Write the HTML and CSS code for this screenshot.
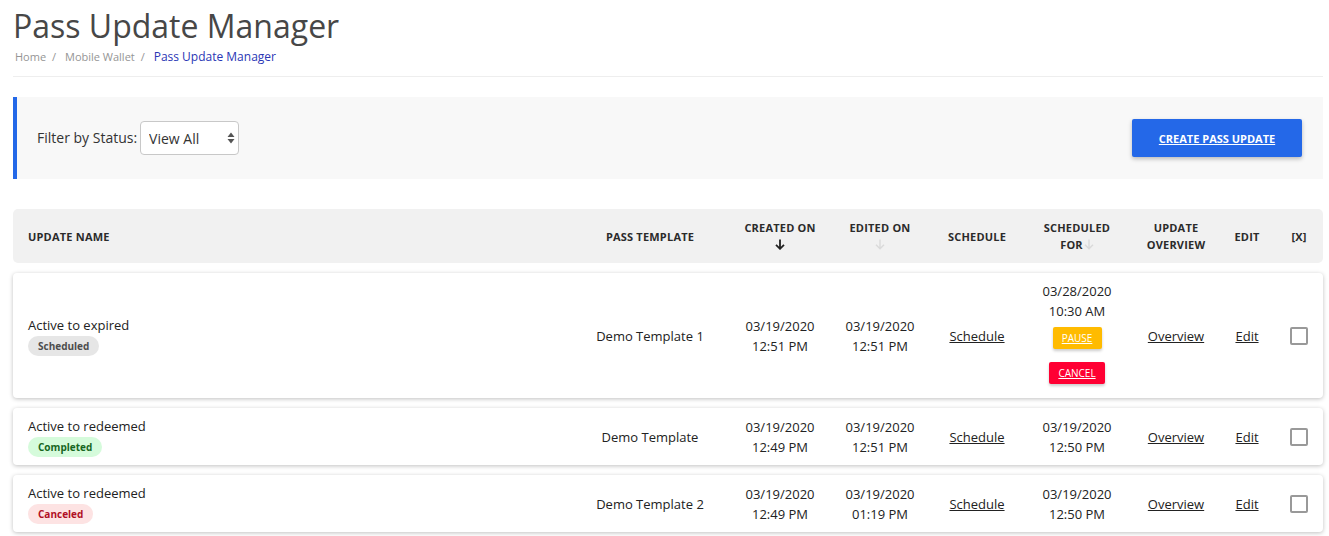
FILE: index.html
```html
<!DOCTYPE html>
<html lang="en">
<head>
<meta charset="utf-8">
<title>Pass Update Manager</title>
<link rel="stylesheet" href="styles.css">
</head>
<body>
<div class="page">
  <header class="page-head">
    <h1 class="title">Pass Update Manager</h1>
    <nav class="crumbs">
      <a href="#" class="crumb">Home</a><span class="sep">/</span>
      <a href="#" class="crumb">Mobile Wallet</a><span class="sep">/</span>
      <span class="crumb current">Pass Update Manager</span>
    </nav>
  </header>

  <section class="filter-bar">
    <div class="filter">
      <label class="filter-label" for="status">Filter by Status:</label>
      <div class="select-wrap">
        <select id="status" class="select">
          <option>View All</option>
          <option>Scheduled</option>
          <option>Completed</option>
          <option>Canceled</option>
        </select>
        <svg class="select-arrows" width="8" height="12" viewBox="0 0 8 12"><path d="M4 0.5 L7.5 5 L0.5 5 Z M4 11.5 L7.5 7 L0.5 7 Z" fill="#555"/></svg>
      </div>
    </div>
    <a href="#" class="btn-create">CREATE PASS UPDATE</a>
  </section>

  <div class="table">
    <div class="row head">
      <div class="cell name">UPDATE NAME</div>
      <div class="cell">PASS TEMPLATE</div>
      <div class="cell">CREATED ON<br><svg class="sort" width="10" height="11" viewBox="0 0 10 11"><path d="M5 0.5 V9.5 M1 5.8 L5 9.8 L9 5.8" fill="none" stroke="#222" stroke-width="1.8"/></svg></div>
      <div class="cell">EDITED ON<br><svg class="sort" width="10" height="11" viewBox="0 0 10 11"><path d="M5 0.5 V9.5 M1 5.8 L5 9.8 L9 5.8" fill="none" stroke="#dadada" stroke-width="1.4"/></svg></div>
      <div class="cell">SCHEDULE</div>
      <div class="cell">SCHEDULED<br>FOR<svg class="sort inline" width="10" height="11" viewBox="0 0 10 11"><path d="M5 0.5 V9.5 M1 5.8 L5 9.8 L9 5.8" fill="none" stroke="#dadada" stroke-width="1.4"/></svg></div>
      <div class="cell">UPDATE<br>OVERVIEW</div>
      <div class="cell">EDIT</div>
      <div class="cell">[X]</div>
    </div>

    <div class="row card tall">
      <div class="cell name">
        <div>Active to expired</div>
        <span class="badge scheduled">Scheduled</span>
      </div>
      <div class="cell">Demo Template 1</div>
      <div class="cell">03/19/2020<br>12:51 PM</div>
      <div class="cell">03/19/2020<br>12:51 PM</div>
      <div class="cell"><a href="#" class="link">Schedule</a></div>
      <div class="cell stack">
        <div>03/28/2020<br>10:30 AM</div>
        <a href="#" class="mini pause">PAUSE</a>
        <a href="#" class="mini cancel">CANCEL</a>
      </div>
      <div class="cell"><a href="#" class="link">Overview</a></div>
      <div class="cell"><a href="#" class="link">Edit</a></div>
      <div class="cell"><span class="check"></span></div>
    </div>

    <div class="row card">
      <div class="cell name">
        <div>Active to redeemed</div>
        <span class="badge completed">Completed</span>
      </div>
      <div class="cell">Demo Template</div>
      <div class="cell">03/19/2020<br>12:49 PM</div>
      <div class="cell">03/19/2020<br>12:51 PM</div>
      <div class="cell"><a href="#" class="link">Schedule</a></div>
      <div class="cell">03/19/2020<br>12:50 PM</div>
      <div class="cell"><a href="#" class="link">Overview</a></div>
      <div class="cell"><a href="#" class="link">Edit</a></div>
      <div class="cell"><span class="check"></span></div>
    </div>

    <div class="row card">
      <div class="cell name">
        <div>Active to redeemed</div>
        <span class="badge canceled">Canceled</span>
      </div>
      <div class="cell">Demo Template 2</div>
      <div class="cell">03/19/2020<br>12:49 PM</div>
      <div class="cell">03/19/2020<br>01:19 PM</div>
      <div class="cell"><a href="#" class="link">Schedule</a></div>
      <div class="cell">03/19/2020<br>12:50 PM</div>
      <div class="cell"><a href="#" class="link">Overview</a></div>
      <div class="cell"><a href="#" class="link">Edit</a></div>
      <div class="cell"><span class="check"></span></div>
    </div>
  </div>
</div>
</body>
</html>
```

FILE: styles.css
```css
* { box-sizing: border-box; }
html, body { margin: 0; padding: 0; background: #fff; }
body {
  font-family: "Open Sans", "Liberation Sans", sans-serif;
  color: #222;
  font-size: 13px;
}
.page {
  padding: 0 6px 0 13px;
}
.page-head {
  border-bottom: 1px solid #eeeeee;
  padding-bottom: 11px;
}
.title {
  margin: 0;
  padding-top: 5px;
  font-size: 32px;
  font-weight: 400;
  line-height: 42px;
  color: #474747;
}
.crumbs {
  font-size: 11px;
  line-height: 16px;
  padding-left: 2px;
  margin-top: 2px;
}
.crumb { color: #959595; text-decoration: none; }
.crumb.current { color: #2a36b5; font-size: 12px; }
.sep { color: #959595; margin: 0 6px; }

.filter-bar {
  margin-top: 20px;
  height: 82px;
  background: #f8f8f8;
  border-left: 4px solid #2368e8;
  display: flex;
  align-items: center;
  justify-content: space-between;
  padding: 0 21px 0 20px;
}
.filter { display: flex; align-items: center; gap: 3px; }
.filter-label { font-size: 14px; color: #333; margin-top: -2px; }
.select-wrap { position: relative; }
.select {
  appearance: none;
  -webkit-appearance: none;
  width: 99px;
  height: 34px;
  border: 1px solid #c8c8c8;
  border-radius: 4px;
  background: #fff;
  font-family: inherit;
  font-size: 14px;
  color: #333;
  padding: 0 8px;
}
.select-arrows {
  position: absolute;
  right: 4px;
  top: 11px;
  pointer-events: none;
}
.btn-create {
  width: 170px;
  height: 38px;
  background: #2468e8;
  color: #fff;
  font-weight: 700;
  font-size: 11px;
  text-decoration: underline;
  display: flex;
  align-items: center;
  justify-content: center;
  border-radius: 2px;
  box-shadow: 0 2px 4px rgba(0,0,0,0.25);
}

.table { margin-top: 30px; display: flex; flex-direction: column; gap: 10px; padding-bottom: 10px; }
.row {
  display: grid;
  grid-template-columns: 554px 166px 94px 106px 88px 112px 86px 56px 48px;
  align-items: center;
}
.row.head {
  background: #f1f1f1;
  border-radius: 5px;
  min-height: 54px;
  font-size: 11px;
  font-weight: 700;
  line-height: 17px;
  color: #2b2b2b;
  letter-spacing: 0.2px;
}
.sort { display: inline-block; vertical-align: -1px; }
.sort.inline { margin-left: 1px; }
.cell { text-align: center; line-height: 20px; }
.head .cell { line-height: 17px; }
.cell.name { text-align: left; padding-left: 15px; }
.card {
  background: #fff;
  border-radius: 4px;
  box-shadow: 0 1px 4px rgba(0,0,0,0.25);
  min-height: 56px;
  padding: 8px 0;
  color: #222;
}
.stack { display: flex; flex-direction: column; align-items: center; }
.badge {
  display: inline-block;
  margin-top: 1px;
  height: 20px;
  line-height: 20px;
  padding: 0 10px;
  border-radius: 10px;
  font-size: 10px;
  font-weight: 700;
}
.badge.scheduled { background: #e6e6e6; color: #4d4d4d; }
.badge.completed { background: #d5fbdb; color: #17661f; }
.badge.canceled { background: #fde3e3; color: #b00f25; }
.link { color: #222; text-decoration: underline; }
.mini {
  display: block;
  height: 22px;
  line-height: 22px;
  color: #fff;
  font-size: 10px;
  text-decoration: underline;
  border-radius: 2px;
  box-shadow: 0 2px 3px rgba(0,0,0,0.2);
}
.mini.pause { background: #ffbb00; width: 49px; margin-top: 6px; }
.mini.cancel { background: #ff0033; width: 56px; margin-top: 13px; margin-bottom: 6px; }
.check {
  display: inline-block;
  width: 18px;
  height: 18px;
  border: 2px solid #999;
  border-radius: 2px;
  vertical-align: middle;
  margin-top: -2px;
}
```
